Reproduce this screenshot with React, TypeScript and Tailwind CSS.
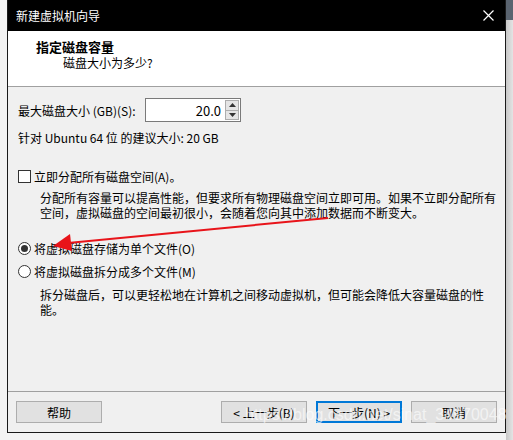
export default function App() {
  const font = { fontFamily: '"Noto Sans CJK SC", "Noto Sans", sans-serif' };
  return (
    <div
      className="relative flex h-[440px] w-[513px] overflow-hidden bg-[#f3f3f3] text-[12px] leading-[15px] text-black"
      style={font}
    >
      <div className="w-[7px] shrink-0" />
      {/* dialog window */}
      <div className="flex h-[433px] w-[499px] shrink-0 flex-col border-x border-b border-[#1a1a1a] bg-[#f0f0f0]">
        <div className="flex h-[31px] shrink-0 items-center justify-between bg-black pl-[8px] pr-[10px] text-white">
          <span>新建虚拟机向导</span>
          <svg width="11" height="11" viewBox="0 0 11 11" className="mr-[1px]">
            <path d="M0.5 0.5 L10.5 10.5 M10.5 0.5 L0.5 10.5" stroke="white" strokeWidth="1.2" />
          </svg>
        </div>
        <div className="flex h-[56px] shrink-0 flex-col border-b border-[#a0a0a0] bg-white pl-[28px] pt-[8px]">
          <span className="text-[13px] font-bold">指定磁盘容量</span>
          <span className="pl-[27px] pt-[1px]">磁盘大小为多少?</span>
        </div>
        <div className="flex flex-1 flex-col whitespace-nowrap pl-[10px]">
          <div className="mt-[11px] flex items-center">
            <span className="w-[127px]">最大磁盘大小 (GB)(S):</span>
            <div className="flex h-[24px] w-[96px] items-center border border-[#7a7a7a] bg-white">
              <span className="flex-1 pr-[4px] text-right text-[13px]">20.0</span>
              <div className="mr-[1px] flex h-[20px] w-[14px] flex-col border border-[#adadad] bg-[#e5e5e5]">
                <div className="flex flex-1 items-center justify-center border-b border-[#adadad]">
                  <svg width="7" height="4" viewBox="0 0 7 4"><path d="M0 4 L3.5 0 L7 4 Z" fill="#333" /></svg>
                </div>
                <div className="flex flex-1 items-center justify-center">
                  <svg width="7" height="4" viewBox="0 0 7 4"><path d="M0 0 L3.5 4 L7 0 Z" fill="#333" /></svg>
                </div>
              </div>
            </div>
          </div>
          <div className="mt-[8px]">针对 Ubuntu 64 位 的建议大小: 20 GB</div>

          <div className="mt-[24px] flex items-center gap-[3px]">
            <div className="h-[13px] w-[13px] border border-[#333] bg-white" />
            <span>立即分配所有磁盘空间(A)。</span>
          </div>
          <div className="mt-[6px] pl-[22px]">
            <div>分配所有容量可以提高性能，但要求所有物理磁盘空间立即可用。如果不立即分配所有</div>
            <div>空间，虚拟磁盘的空间最初很小，会随着您向其中添加数据而不断变大。</div>
          </div>

          <div className="mt-[21px] flex items-center gap-[3px]">
            <div className="flex h-[13px] w-[13px] items-center justify-center rounded-full border border-[#333] bg-white">
              <div className="h-[7px] w-[7px] rounded-full bg-[#333]" />
            </div>
            <span>将虚拟磁盘存储为单个文件(O)</span>
          </div>
          <div className="mt-[8px] flex items-center gap-[3px]">
            <div className="h-[13px] w-[13px] rounded-full border border-[#333] bg-white" />
            <span>将虚拟磁盘拆分成多个文件(M)</span>
          </div>
          <div className="mt-[8px] pl-[22px]">
            <div>拆分磁盘后，可以更轻松地在计算机之间移动虚拟机，但可能会降低大容量磁盘的性</div>
            <div>能。</div>
          </div>
        </div>
        <div className="flex h-[41px] shrink-0 items-start border-t border-[#a0a0a0] pl-[8px] pt-[9px]">
          <button className="h-[22px] w-[86px] border border-[#adadad] bg-[#e1e1e1]">帮助</button>
          <div className="flex-1" />
          <div className="flex gap-[9px] pr-[8px]">
            <button className="h-[22px] w-[86px] border border-[#adadad] bg-[#e1e1e1]">&lt; 上一步(B)</button>
            <button className="h-[22px] w-[86px] border-2 border-[#0078d7] bg-[#e1e1e1]">下一步(N) &gt;</button>
            <button className="h-[22px] w-[86px] border border-[#adadad] bg-[#e1e1e1]">取消</button>
          </div>
        </div>
      </div>
      {/* window behind on the right */}
      <div className="flex flex-1 flex-col bg-gradient-to-r from-[#c8c8c8] to-[#e4e4e4]">
        <div className="h-[20px] bg-[#5a6470]" />
      </div>

      {/* red annotation arrow */}
      <svg className="pointer-events-none absolute left-0 top-0" width="513" height="440">
        <line x1="328" y1="218" x2="68" y2="243" stroke="#e8141a" strokeWidth="2" />
        <path d="M53 246 L70 234 L72 251 Z" fill="#e8141a" />
      </svg>

      {/* watermark */}
      <div
        className="pointer-events-none absolute left-[245px] top-[405px] text-[16px] leading-[20px] text-white/60"
        style={{ fontFamily: '"Liberation Sans", sans-serif' }}
      >
        https://blog.csdn.net/sinat_34970048
      </div>
    </div>
  );
}
